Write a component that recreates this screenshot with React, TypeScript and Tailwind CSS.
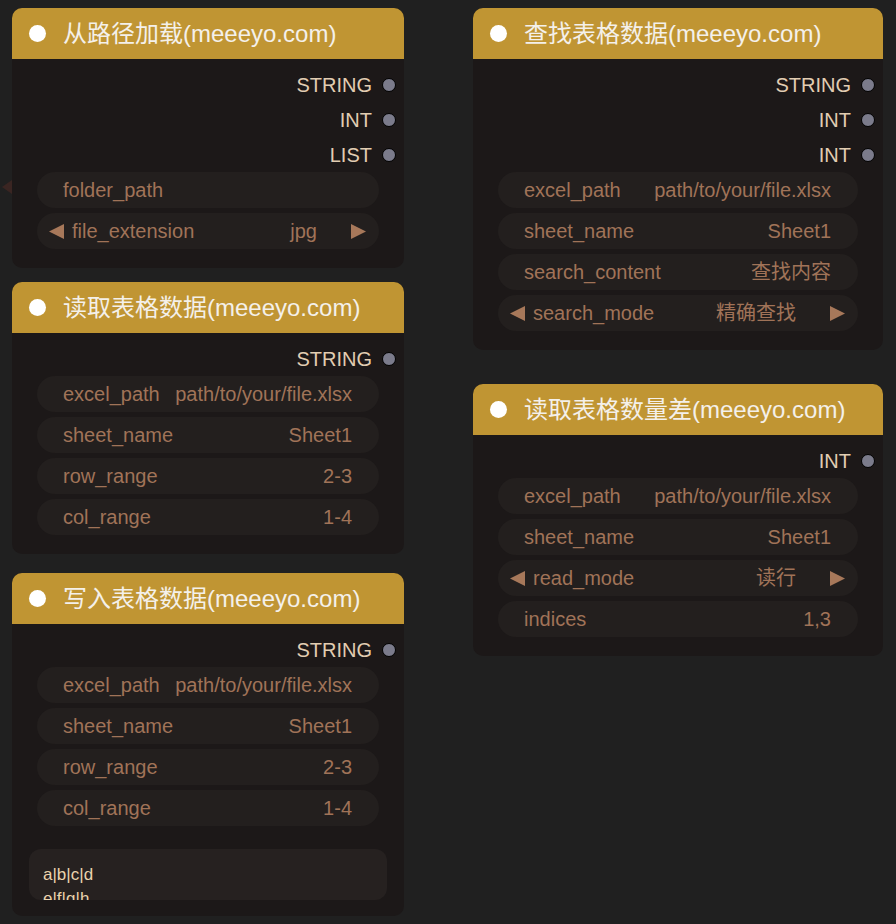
import { ReactNode } from "react";

const FONT = {
  fontFamily: '"Liberation Sans", Arial, "Noto Sans CJK SC", sans-serif',
};

type Widget =
  | { kind: "text"; label: string; value?: string }
  | { kind: "combo"; label: string; value: string };

interface NodeProps {
  title: string;
  outputs: string[];
  widgets: Widget[];
  width: string;
  children?: ReactNode;
}

const Arrow = ({ dir }: { dir: "left" | "right" }) => (
  <svg width="17" height="17" viewBox="0 0 17 17" className="shrink-0">
    {dir === "left" ? (
      <polygon points="16,1 16,16 1,8.5" fill="#a7785a" />
    ) : (
      <polygon points="1,1 1,16 16,8.5" fill="#a7785a" />
    )}
  </svg>
);

const WidgetRow = ({ w }: { w: Widget }) => {
  if (w.kind === "combo") {
    return (
      <div className="flex items-center h-[36px] rounded-full bg-[#231f1e] pl-[11px] pr-[12px] text-[20px] text-[#a07358]">
        <Arrow dir="left" />
        <span className="ml-[7px]">{w.label}</span>
        <span className="ml-auto mr-[33px]">{w.value}</span>
        <Arrow dir="right" />
      </div>
    );
  }
  return (
    <div className="flex items-center h-[36px] rounded-full bg-[#231f1e] pl-[26px] pr-[27px] text-[20px] text-[#a07358] whitespace-nowrap overflow-hidden">
      <span>{w.label}</span>
      <span className="ml-auto">{w.value}</span>
    </div>
  );
};

const Node = ({ title, outputs, widgets, width, children }: NodeProps) => (
  <div className={`${width} rounded-[10px] bg-[#1c1818] overflow-hidden`}>
    <div className="h-[51px] bg-[#c09533] flex items-center pl-[17px]">
      <div className="w-[17px] h-[17px] rounded-full bg-white" />
      <span className="ml-[17px] text-[24px] text-[#f4f0ea] whitespace-nowrap">{title}</span>
    </div>
    <div className="pt-[8px] pb-[19px]">
      {outputs.map((o, i) => (
        <div key={i} className="h-[35px] flex items-center justify-end pr-[8px]">
          <span className="text-[20px] text-[#e2cdb2]">{o}</span>
          <div className="ml-[10px] w-[14px] h-[14px] rounded-full bg-[#7b7b8b] border border-black" />
        </div>
      ))}
      <div className="flex flex-col gap-[5px] px-[25px]">
        {widgets.map((w, i) => (
          <WidgetRow key={i} w={w} />
        ))}
      </div>
      {children}
    </div>
  </div>
);

const excelWidgets: Widget[] = [
  { kind: "text", label: "excel_path", value: "path/to/your/file.xlsx" },
  { kind: "text", label: "sheet_name", value: "Sheet1" },
  { kind: "text", label: "row_range", value: "2-3" },
  { kind: "text", label: "col_range", value: "1-4" },
];

export default function App() {
  return (
    <div className="relative w-[896px] h-[924px] bg-[#202020] overflow-hidden flex" style={FONT}>
      {/* peeking input slot at the left edge */}
      <svg className="absolute left-[2px] top-[180px]" width="10" height="14" viewBox="0 0 10 14">
        <polygon points="10,0 10,14 0,7" fill="#3a2522" />
      </svg>

      <div className="ml-[12px] mt-[8px] flex flex-col">
        <Node
          width="w-[392px]"
          title="从路径加载(meeeyo.com)"
          outputs={["STRING", "INT", "LIST"]}
          widgets={[
            { kind: "text", label: "folder_path" },
            { kind: "combo", label: "file_extension", value: "jpg" },
          ]}
        />
        <div className="mt-[14px]">
          <Node width="w-[392px]" title="读取表格数据(meeeyo.com)" outputs={["STRING"]} widgets={excelWidgets} />
        </div>
        <div className="mt-[19px]">
          <Node width="w-[392px]" title="写入表格数据(meeeyo.com)" outputs={["STRING"]} widgets={excelWidgets}>
            <div className="mx-[17px] mt-[23px] -mb-[3px] h-[51px] rounded-[12px] bg-[#262120] pl-[14px] pt-[14px] overflow-hidden text-[17px] leading-[24px] text-[#ead3ad]">
              <div>a|b|c|d</div>
              <div>e|f|g|h</div>
            </div>
          </Node>
        </div>
      </div>

      <div className="ml-[69px] mt-[8px] flex flex-col">
        <Node
          width="w-[410px]"
          title="查找表格数据(meeeyo.com)"
          outputs={["STRING", "INT", "INT"]}
          widgets={[
            { kind: "text", label: "excel_path", value: "path/to/your/file.xlsx" },
            { kind: "text", label: "sheet_name", value: "Sheet1" },
            { kind: "text", label: "search_content", value: "查找内容" },
            { kind: "combo", label: "search_mode", value: "精确查找" },
          ]}
        />
        <div className="mt-[34px]">
          <Node
            width="w-[410px]"
            title="读取表格数量差(meeeyo.com)"
            outputs={["INT"]}
            widgets={[
              { kind: "text", label: "excel_path", value: "path/to/your/file.xlsx" },
              { kind: "text", label: "sheet_name", value: "Sheet1" },
              { kind: "combo", label: "read_mode", value: "读行" },
              { kind: "text", label: "indices", value: "1,3" },
            ]}
          />
        </div>
      </div>
    </div>
  );
}
